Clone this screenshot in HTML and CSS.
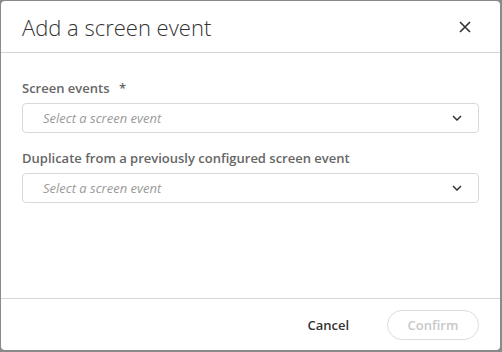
FILE: index.html
```html
<!DOCTYPE html>
<html lang="en">
<head>
  <meta charset="UTF-8">
  <meta name="viewport" content="width=device-width, initial-scale=1.0">
  <title>Add a screen event</title>
  <link rel="stylesheet" href="styles.css">
</head>
<body>

  <div class="dialog">
    <div class="dialog-header">
      <h1>Add a screen event</h1>
      <button type="button" class="close-btn" aria-label="Close">
        <svg width="12" height="12" viewBox="0 0 12 12">
          <path d="M1 1 L11 11 M11 1 L1 11" stroke="#333" stroke-width="1.6" fill="none"/>
        </svg>
      </button>
    </div>

    <div class="dialog-body">
      <div class="form-group">
        <label>Screen events <span class="required">*</span></label>
        <div class="select">
          <span class="placeholder">Select a screen event</span>
          <svg width="10" height="6" viewBox="0 0 10 6">
            <path d="M1 1 L5 5 L9 1" stroke="#333" stroke-width="1.5" fill="none"/>
          </svg>
        </div>
      </div>

      <div class="form-group">
        <label>Duplicate from a previously configured screen event</label>
        <div class="select">
          <span class="placeholder">Select a screen event</span>
          <svg width="10" height="6" viewBox="0 0 10 6">
            <path d="M1 1 L5 5 L9 1" stroke="#333" stroke-width="1.5" fill="none"/>
          </svg>
        </div>
      </div>
    </div>

    <div class="dialog-footer">
      <button type="button" class="cancel-btn">Cancel</button>
      <button type="button" class="confirm-btn" disabled>Confirm</button>
    </div>
  </div>

</body>
</html>
```

FILE: styles.css
```css
html, body {
  margin: 0;
  height: 100%;
}

body {
  font-family: 'Open Sans', 'Noto Sans', sans-serif;
  background: #8a8a8a;
  padding: 1px 2px 2px 1px;
  box-sizing: border-box;
}

.dialog {
  background: #ffffff;
  border-radius: 4px;
  height: 100%;
  display: flex;
  flex-direction: column;
}

.dialog-header {
  display: flex;
  align-items: center;
  justify-content: space-between;
  height: 51px;
  padding: 0 29px 0 21px;
  border-bottom: 1px solid #d6d6d6;
}

h1 {
  margin: 0;
  font-size: 22px;
  font-weight: 300;
  color: #333;
}

.close-btn {
  background: none;
  border: none;
  padding: 0;
  display: flex;
  cursor: pointer;
}

.dialog-body {
  flex: 1;
  padding: 26px 21px 0;
}

.form-group {
  display: flex;
  flex-direction: column;
  margin-bottom: 16px;
}

label {
  font-size: 13px;
  font-weight: 600;
  color: #666;
  margin-bottom: 6px;
}

.required {
  margin-left: 6px;
}

.select {
  display: flex;
  align-items: center;
  justify-content: space-between;
  height: 28px;
  padding: 0 16px 0 20px;
  border: 1px solid #d9d9d9;
  border-radius: 4px;
}

.placeholder {
  font-size: 13px;
  font-style: italic;
  color: #9a9a9a;
}

.dialog-footer {
  display: flex;
  align-items: center;
  justify-content: flex-end;
  gap: 38px;
  height: 51px;
  padding: 0 21px;
  border-top: 1px solid #d6d6d6;
}

.cancel-btn {
  background: none;
  border: none;
  padding: 0;
  font-family: inherit;
  font-size: 13px;
  font-weight: 600;
  color: #333;
  cursor: pointer;
}

.confirm-btn {
  width: 92px;
  height: 30px;
  background: #fff;
  border: 1px solid #dcdcdc;
  border-radius: 15px;
  font-family: inherit;
  font-size: 13px;
  font-weight: 600;
  color: #c8c8c8;
}
```
